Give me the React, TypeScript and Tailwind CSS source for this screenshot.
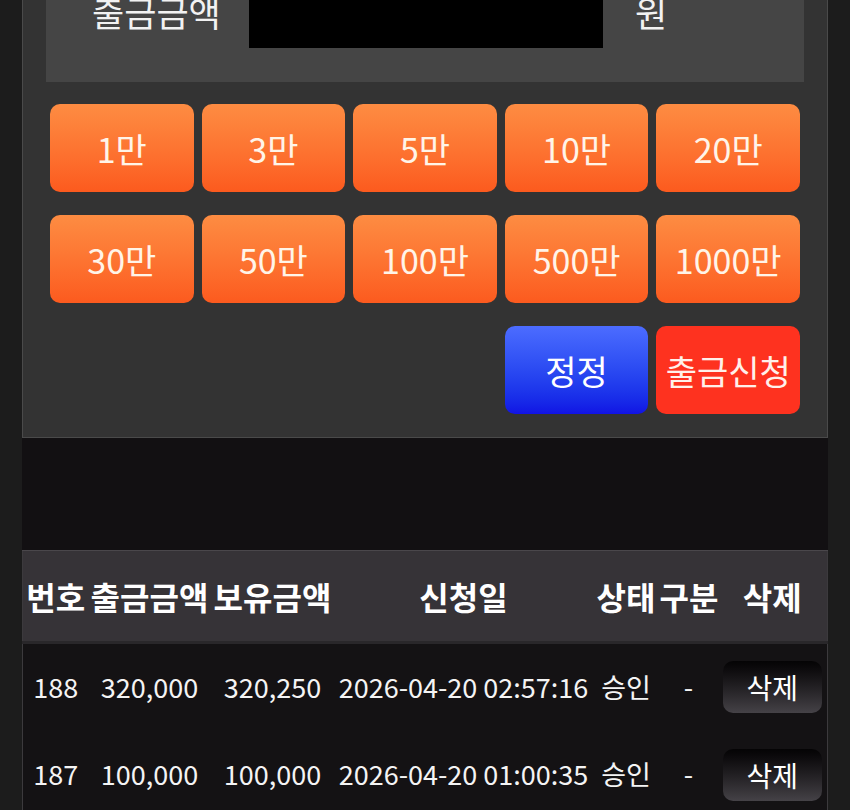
import React from "react";

const amounts = ["1만", "3만", "5만", "10만", "20만", "30만", "50만", "100만", "500만", "1000만"];

const rows = [
  { no: 188, amount: "320,000", balance: "320,250", date: "2026-04-20 02:57:16", status: "승인", kind: "-" },
  { no: 187, amount: "100,000", balance: "100,000", date: "2026-04-20 01:00:35", status: "승인", kind: "-" },
];

// withdrawal form (scrolled a bit) + history table
export default function App() {
  return (
    <div
      className="min-h-[810px] bg-[#1c1c1c] overflow-hidden"
      style={{ fontFamily: '"Noto Sans CJK KR", "Noto Sans", sans-serif' }}
    >
      <div className="mx-[22px] -mt-[75px]">
        {/* form panel */}
        <div className="bg-[#333333] border-x border-b border-[#4a4a4a] px-[23px] pt-[23px] pb-[23px]">
          <div className="bg-[#454545] flex items-center pt-[34px] pb-[34px] pl-[46px]">
            <span className="text-[35px] leading-none text-[#f2f2f2] w-[157px] mb-[8px]">출금금액</span>
            <div className="bg-black w-[354px] h-[66px]" />
            <span className="text-[35px] leading-none text-[#f2f2f2] ml-[32px] mb-[8px]">원</span>
          </div>

          <div className="grid grid-cols-5 gap-x-[8px] gap-y-[23px] mx-[4px] mt-[22px]">
            {amounts.map((a) => (
              <button
                key={a}
                className="h-[88px] rounded-[10px] bg-gradient-to-b from-[#fd8c42] to-[#fc5a1e] text-[34px] text-[#fff4e8] whitespace-nowrap"
              >
                {a}
              </button>
            ))}
            <button className="col-start-4 h-[88px] rounded-[10px] bg-gradient-to-b from-[#4c6cff] to-[#1212e4] text-[34px] text-white">
              정정
            </button>
            <button className="h-[88px] rounded-[10px] bg-[#fe321f] text-[34px] text-[#fff0ea] whitespace-nowrap">
              출금신청
            </button>
          </div>
        </div>

        <div className="h-[112px] bg-[#121012]" />

        {/* history */}
        <table className="w-full table-fixed border-collapse bg-[#141214] border-x border-[#3c3a3d]">
          <colgroup>
            <col className="w-[66px]" />
            <col className="w-[122px]" />
            <col className="w-[124px]" />
            <col className="w-[258px]" />
            <col className="w-[67px]" />
            <col className="w-[58px]" />
            <col />
          </colgroup>
          <thead>
            <tr className="h-[92px] bg-[#363337] border-t border-[#4a474b] border-b-[3px] border-b-[#29272a]">
              {["번호", "출금금액", "보유금액", "신청일", "상태", "구분", "삭제"].map((h) => (
                <th key={h} className="p-0 text-[32px] font-bold text-white whitespace-nowrap text-center overflow-visible">
                  {h}
                </th>
              ))}
            </tr>
          </thead>
          <tbody>
            {rows.map((r) => (
              <tr key={r.no} className="h-[88px] text-[27px] text-[#f4f4f4]">
                <td className="p-0 text-center whitespace-nowrap">{r.no}</td>
                <td className="p-0 text-center whitespace-nowrap">{r.amount}</td>
                <td className="p-0 text-center whitespace-nowrap">{r.balance}</td>
                <td className="p-0 text-center whitespace-nowrap">{r.date}</td>
                <td className="p-0 text-center whitespace-nowrap">{r.status}</td>
                <td className="p-0 text-center whitespace-nowrap">{r.kind}</td>
                <td className="p-0 text-center">
                  <button className="w-[99px] h-[52px] rounded-[10px] bg-gradient-to-b from-[#050405] to-[#454247] text-[28px] text-white">
                    삭제
                  </button>
                </td>
              </tr>
            ))}
          </tbody>
        </table>
      </div>
    </div>
  );
}
